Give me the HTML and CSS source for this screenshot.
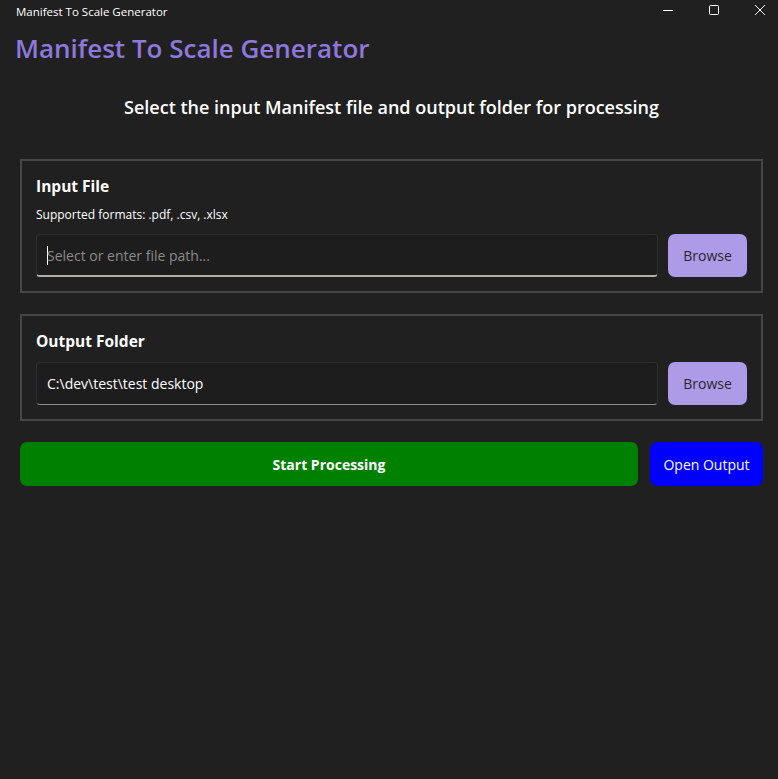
FILE: index.html
```html
<!DOCTYPE html>
<html>
<head>
<meta charset="utf-8">
<link rel="stylesheet" href="styles.css">
</head>
<body>
<div class="titlebar">
  <span class="win-title">Manifest To Scale Generator</span>
  <div class="controls">
    <svg class="ctl" width="46" height="22" viewBox="0 0 46 22"><line x1="18" y1="10.5" x2="28" y2="10.5" stroke="#fff" stroke-width="1"/></svg>
    <svg class="ctl" width="46" height="22" viewBox="0 0 46 22"><rect x="18.5" y="5.5" width="9" height="9" rx="1" fill="none" stroke="#fff" stroke-width="1"/></svg>
    <svg class="ctl" width="46" height="22" viewBox="0 0 46 22"><path d="M18 5 L28 15 M28 5 L18 15" stroke="#fff" stroke-width="1"/></svg>
  </div>
</div>
<main class="app">
  <h1 class="app-title">Manifest To Scale Generator</h1>
  <p class="subtitle">Select the input Manifest file and output folder for processing</p>

  <section class="card card-input">
    <h2 class="card-title">Input File</h2>
    <p class="hint">Supported formats: .pdf, .csv, .xlsx</p>
    <div class="row">
      <div class="field focused"><span class="caret"></span><span class="placeholder">Select or enter file path...</span></div>
      <button class="browse">Browse</button>
    </div>
  </section>

  <section class="card card-output">
    <h2 class="card-title">Output Folder</h2>
    <div class="row">
      <div class="field"><span class="value">C:\dev\test\test desktop</span></div>
      <button class="browse">Browse</button>
    </div>
  </section>

  <div class="actions">
    <button class="start">Start Processing</button>
    <button class="open">Open Output</button>
  </div>
</main>
</body>
</html>
```
FILE: styles.css
```css
* { box-sizing: border-box; }
html, body { margin: 0; padding: 0; }
body {
  background: #202020;
  color: #ffffff;
  font-family: "Open Sans", "Noto Sans", sans-serif;
  width: 778px;
  height: 779px;
  overflow: hidden;
}
.titlebar {
  height: 22px;
  display: flex;
  align-items: center;
  justify-content: space-between;
}
.win-title {
  font-size: 11.5px;
  padding-left: 16px;
  padding-top: 1px;
  color: #fff;
}
.controls { display: flex; margin-right: -5px; }
.ctl { display: block; }
.app {
  padding: 0 15px 0 20px;
}
.app-title {
  margin: 9px 0 0 -5px;
  font-size: 26px;
  font-weight: 600;
  color: #8e78dc;
  line-height: 34px;
}
.subtitle {
  margin: 30px 0 0;
  text-align: center;
  font-size: 18px;
  font-weight: 600;
  line-height: 24px;
}
.card {
  border: 2px solid #464646;
  padding: 14px 14px 14px 14px;
}
.card-input { margin-top: 40px; }
.card-output { margin-top: 21px; }
.card-title {
  margin: 0;
  font-size: 15.5px;
  font-weight: 700;
  line-height: 22px;
}
.hint {
  margin: 10px 0 0;
  font-size: 12px;
  line-height: 16px;
}
.row {
  display: flex;
  gap: 10px;
  margin-top: 11px;
}
.card-output .row { margin-top: 10px; }
.field {
  flex: 1;
  height: 43px;
  border: 1px solid #2e2e2e;
  border-bottom: 1px solid #8a8a8a;
  border-radius: 4px;
  background: #1d1d1d;
  display: flex;
  align-items: center;
  padding-left: 10px;
  font-size: 14px;
}
.field.focused { border-bottom: 2px solid #b0b0a8; }
.caret {
  display: inline-block;
  width: 1px;
  height: 19px;
  background: #fff;
  margin-right: -1px;
}
.placeholder { color: #8a8a8a; }
.value { color: #fff; }
.browse {
  width: 79px;
  height: 43px;
  border: none;
  border-radius: 7px;
  background: #ae9be8;
  color: #2a2530;
  font-family: inherit;
  font-size: 14px;
}
.actions {
  display: flex;
  gap: 12px;
  margin-top: 21px;
}
.start, .open {
  height: 44px;
  border: none;
  border-radius: 7px;
  color: #fff;
  font-family: inherit;
  font-size: 14px;
}
.start {
  flex: 1;
  background: #008000;
  font-weight: 700;
}
.open {
  width: 113px;
  background: #0000ff;
}
```
